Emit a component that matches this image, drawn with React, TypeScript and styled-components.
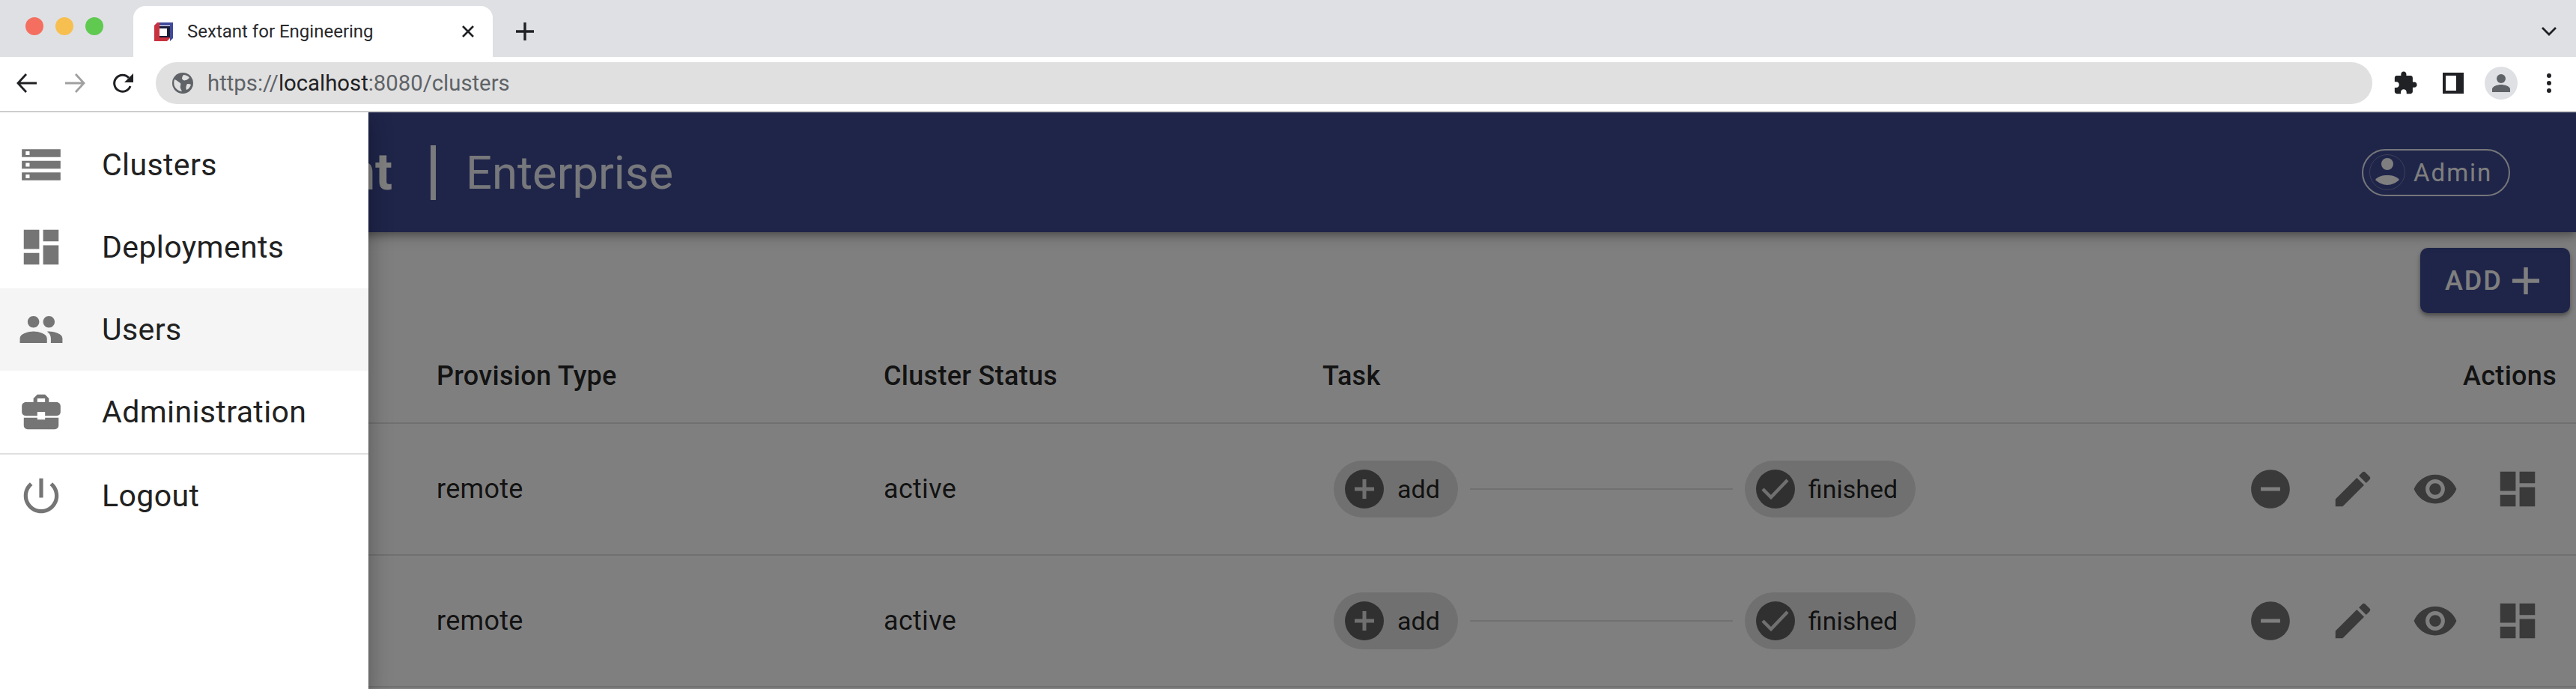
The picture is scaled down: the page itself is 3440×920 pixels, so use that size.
import React from "react";
import styled, { createGlobalStyle } from "styled-components";

const GlobalStyle = createGlobalStyle`
  * { box-sizing: border-box; }
  html, body { margin: 0; padding: 0; background: #fff; }
  body { font-family: Roboto, "Liberation Sans", sans-serif; overflow: hidden; }
`;

const Screen = styled.div`
  width: 3440px;
  height: 920px;
  overflow: hidden;
  display: flex;
  flex-direction: column;
`;

/* browser chrome */
const TabStrip = styled.div`
  height: 76px;
  flex: none;
  background: #dfe0e4;
  display: flex;
  align-items: flex-end;
  color: #202124;
`;

const Lights = styled.div`
  width: 178px;
  height: 76px;
  flex: none;
  display: flex;
  align-items: center;
  gap: 16px;
  padding: 0 0 6px 34px;
`;

const Light = styled.span<{ $color: string }>`
  width: 24px;
  height: 24px;
  border-radius: 50%;
  background: ${({ $color }) => $color};
`;

const Tab = styled.div`
  width: 480px;
  height: 68px;
  flex: none;
  background: #fff;
  border-radius: 16px 16px 0 0;
  display: flex;
  align-items: center;
  padding: 0 24px 0 28px;
`;

const TabTitle = styled.span`
  flex: 1;
  margin-left: 19px;
  font-size: 24px;
  color: #28292c;
  white-space: nowrap;
`;

const NewTab = styled.div`
  width: 86px;
  height: 68px;
  display: flex;
  align-items: center;
  justify-content: center;
`;

const StripEnd = styled.div`
  flex: 1;
  height: 68px;
  display: flex;
  align-items: center;
  justify-content: flex-end;
  padding-right: 26px;
`;

const Toolbar = styled.div`
  height: 74px;
  flex: none;
  background: #fff;
  border-bottom: 2px solid #cdcdcd;
  display: flex;
  align-items: center;
  padding: 0 4px 2px;
`;

const ToolSlot = styled.div`
  width: 64px;
  height: 44px;
  flex: none;
  display: flex;
  align-items: center;
  justify-content: center;
`;

const UrlBar = styled.div`
  width: 2960px;
  height: 56px;
  flex: none;
  margin: 0 12px;
  border-radius: 28px;
  background: #e0e0e0;
  display: flex;
  align-items: center;
  padding-left: 22px;
  font-size: 29.3px;
  color: #5f6368;
`;

const UrlText = styled.span`
  margin-left: 19px;
  white-space: nowrap;
  b {
    font-weight: 400;
    color: #202124;
  }
`;

const Avatar = styled.div`
  width: 44px;
  height: 44px;
  border-radius: 50%;
  background: #dfe0e4;
  display: flex;
  align-items: center;
  justify-content: center;
`;

/* application */
const AppArea = styled.div`
  position: relative;
  flex: 1;
  min-height: 0;
  overflow: hidden;
  background: #fff;
`;

const AppBar = styled.header`
  height: 160px;
  background: #3e4a92;
  color: #fff;
  display: flex;
  align-items: center;
  padding-right: 88px;
  box-shadow: 0 4px 10px rgba(0, 0, 0, 0.3), 0 8px 20px rgba(0, 0, 0, 0.14);
  position: relative;
`;

const Brand = styled.div`
  width: 524px;
  flex: none;
  text-align: right;
  font-size: 68px;
  font-weight: 700;
  white-space: nowrap;
`;

const BrandBar = styled.span`
  width: 7px;
  height: 73px;
  flex: none;
  margin-left: 51px;
  background: rgba(255, 255, 255, 0.95);
`;

const Edition = styled.div`
  flex: 1;
  margin-left: 40px;
  padding-top: 2px;
  font-size: 61.5px;
  opacity: 0.92;
`;

const UserChip = styled.div`
  width: 198px;
  height: 63px;
  border-radius: 32px;
  border: 2px solid rgba(255, 255, 255, 0.9);
  display: flex;
  align-items: center;
  padding-left: 8px;
  font-size: 33px;
  letter-spacing: 2px;
`;

const ChipLabel = styled.span`
  margin-left: 11px;
`;

const ActionRow = styled.div`
  display: flex;
  justify-content: flex-end;
  padding: 21px 8px 22px 0;
`;

const AddButton = styled.div`
  width: 200px;
  height: 87px;
  border-radius: 10px;
  background: #3e4a92;
  color: #fff;
  display: flex;
  align-items: center;
  gap: 13px;
  padding-left: 33px;
  font-size: 36px;
  font-weight: 500;
  letter-spacing: 2px;
  box-shadow: 0 3px 5px rgba(0, 0, 0, 0.3), 0 5px 10px rgba(0, 0, 0, 0.16);
`;

const Row = styled.div<{ $height: number }>`
  height: ${({ $height }) => $height}px;
  display: grid;
  grid-template-columns: 583px 597px 586px 1fr auto;
  align-items: center;
  padding-right: 23px;
  border-bottom: 2px solid #e0e0e0;
  font-size: 36px;
  letter-spacing: 0.3px;
  color: rgba(0, 0, 0, 0.87);
`;

const HeadCell = styled.div<{ $end?: boolean }>`
  font-weight: 500;
  white-space: nowrap;
  ${({ $end }) => ($end ? "margin-right: 3px;" : "")}
`;

const Cell = styled.div``;

const Stepper = styled.div`
  display: flex;
  align-items: center;
  padding-left: 15px;
  font-size: 34px;
  letter-spacing: 0;
`;

const Step = styled.div`
  height: 76px;
  border-radius: 38px;
  background: #e0e0e0;
  display: flex;
  align-items: center;
  gap: 18px;
  padding: 0 24px 0 15px;
`;

const StepDot = styled.span`
  width: 52px;
  height: 52px;
  border-radius: 50%;
  background: #616161;
  display: flex;
  align-items: center;
  justify-content: center;
`;

const StepLine = styled.span`
  width: 351px;
  height: 2px;
  margin: 0 16px;
  background: #e0e0e0;
`;

const Actions = styled.div`
  display: flex;
`;

const IconButton = styled.div`
  width: 110px;
  height: 110px;
  display: flex;
  align-items: center;
  justify-content: center;
  color: #757575;
`;

const Icon = styled.svg<{ $size: number; $color?: string }>`
  width: ${({ $size }) => $size}px;
  height: ${({ $size }) => $size}px;
  flex: none;
  fill: ${({ $color }) => $color || "currentColor"};
  display: block;
`;

/* overlay drawer */
const Backdrop = styled.div`
  position: absolute;
  inset: 0;
  background: rgba(0, 0, 0, 0.5);
`;

const Drawer = styled.nav`
  position: absolute;
  left: 0;
  top: 0;
  bottom: 0;
  width: 492px;
  background: #fff;
  padding-top: 15px;
  box-shadow: 0 8px 10px -5px rgba(0, 0, 0, 0.2), 0 16px 24px 2px rgba(0, 0, 0, 0.14),
    0 6px 30px 5px rgba(0, 0, 0, 0.12);
`;

const MenuItem = styled.div<{ $active?: boolean }>`
  height: 110px;
  display: flex;
  align-items: center;
  padding-left: 24px;
  font-size: 41px;
  letter-spacing: 0.4px;
  color: #212121;
  background: ${({ $active }) => ($active ? "#f5f5f5" : "transparent")};
`;

const MenuIcon = styled.span`
  width: 112px;
  flex: none;
  color: #757575;
`;

const Divider = styled.div`
  height: 2px;
  background: #e0e0e0;
`;

const P = {
  storage: "M2 20h20v-4H2v4zm2-3h2v2H4v-2zM2 4v4h20V4H2zm4 3H4V5h2v2zm-4 7h20v-4H2v4zm2-3h2v2H4v-2z",
  dashboard: "M3 13h8V3H3v10zm0 8h8v-6H3v6zm10 0h8V11h-8v10zm0-18v6h8V3h-8z",
  people:
    "M16 11c1.66 0 2.99-1.34 2.99-3S17.66 5 16 5c-1.66 0-3 1.34-3 3s1.34 3 3 3zm-8 0c1.66 0 2.99-1.34 2.99-3S9.66 5 8 5C6.34 5 5 6.34 5 8s1.34 3 3 3zm0 2c-2.33 0-7 1.17-7 3.5V19h14v-2.5c0-2.33-4.67-3.5-7-3.5zm8 0c-.29 0-.62.02-.97.05 1.16.84 1.97 1.97 1.97 3.45V19h6v-2.5c0-2.33-4.67-3.5-7-3.5z",
  business:
    "M10 16v-1H3.01L3 19c0 1.11.89 2 2 2h14c1.11 0 2-.89 2-2v-4h-7v1h-4zm10-9h-4.01V5l-2-2h-4l-2 2v2H4c-1.1 0-2 .9-2 2v3c0 1.11.89 2 2 2h6v-2h4v2h6c1.1 0 2-.9 2-2V9c0-1.1-.9-2-2-2zm-6 0h-4V5h4v2z",
  power:
    "M13 3h-2v10h2V3zm4.83 2.17l-1.42 1.42C17.99 7.86 19 9.81 19 12c0 3.87-3.13 7-7 7s-7-3.13-7-7c0-2.19 1.01-4.14 2.58-5.42L6.17 5.17C4.23 6.82 3 9.26 3 12c0 4.97 4.03 9 9 9s9-4.03 9-9c0-2.74-1.23-5.18-3.17-6.83z",
  remove: "M12 2C6.48 2 2 6.48 2 12s4.48 10 10 10 10-4.48 10-10S17.52 2 12 2zm5 11H7v-2h10v2z",
  edit: "M3 17.25V21h3.75L17.81 9.94l-3.75-3.75L3 17.25zM20.71 7.04c.39-.39.39-1.02 0-1.41l-2.34-2.34c-.39-.39-1.02-.39-1.41 0l-1.83 1.83 3.75 3.75 1.83-1.83z",
  eye: "M12 4.5C7 4.5 2.73 7.61 1 12c1.73 4.39 6 7.5 11 7.5s9.27-3.11 11-7.5c-1.73-4.39-6-7.5-11-7.5zM12 17c-2.76 0-5-2.24-5-5s2.24-5 5-5 5 2.24 5 5-2.24 5-5 5zm0-8c-1.66 0-3 1.34-3 3s1.34 3 3 3 3-1.34 3-3-1.34-3-3-3z",
  extension:
    "M20.5 11H19V7c0-1.1-.9-2-2-2h-4V3.5C13 2.12 11.88 1 10.5 1S8 2.12 8 3.5V5H4c-1.1 0-1.99.9-1.99 2v3.8H3.5c1.49 0 2.7 1.21 2.7 2.7s-1.21 2.7-2.7 2.7H2V20c0 1.1.9 2 2 2h3.8v-1.5c0-1.49 1.21-2.7 2.7-2.7 1.49 0 2.7 1.21 2.7 2.7V22H17c1.1 0 2-.9 2-2v-4h1.5c1.38 0 2.5-1.12 2.5-2.5S21.88 11 20.5 11z",
};

const Glyph = ({ d, size = 62 }: { d: string; size?: number }) => (
  <Icon $size={size} viewBox="0 0 24 24">
    <path d={d} />
  </Icon>
);

const Favicon = () => (
  <svg width="25" height="25" viewBox="0 0 25 25">
    <path d="M4 0h21v21l-4 4V4H4z" fill="#3f4a9a" />
    <path d="M0 4l4-4h3v19h14v2l-4 4H0z" fill="#c8323f" />
    <path d="M7 5h14v15H7z" fill="#1a1d3a" />
    <path d="M7 8h10v10H7z" fill="#fff" />
  </svg>
);

const CloseX = () => (
  <svg width="18" height="18" viewBox="0 0 18 18" stroke="#202124" strokeWidth="2.6" fill="none">
    <path d="M2 2l14 14M16 2L2 16" />
  </svg>
);

const PlusMark = () => (
  <svg width="24" height="24" viewBox="0 0 24 24" stroke="#202124" strokeWidth="3.4" fill="none">
    <path d="M12 0v24M0 12h24" />
  </svg>
);

const Chevron = () => (
  <svg width="20" height="12" viewBox="0 0 20 12" stroke="#202124" strokeWidth="2.8" fill="none">
    <path d="M1 1l9 9 9-9" />
  </svg>
);

const Arrow = ({ flip, color }: { flip?: boolean; color: string }) => (
  <svg
    width="28"
    height="26"
    viewBox="0 0 28 26"
    stroke={color}
    strokeWidth="2.8"
    fill="none"
    style={flip ? { transform: "scaleX(-1)" } : undefined}
  >
    <path d="M27 13H2M13 1L2 13l11 12" />
  </svg>
);

const Reload = () => (
  <svg width="28" height="28" viewBox="0 0 28 28">
    <path d="M24 18a11 11 0 1 1-2-11" stroke="#202124" strokeWidth="3" fill="none" />
    <path d="M28 1v12H16z" fill="#202124" />
  </svg>
);

const Globe = () => (
  <svg width="28" height="28" viewBox="0 0 28 28">
    <circle cx="14" cy="14" r="14" fill="#5f6368" />
    <path
      d="M3 9c3 1 6 4 8 5 1 2-1 4 0 7l2 4c-4 0-8-3-10-7-1-3-1-6 0-9zM15 3c3 0 6 1 8 4-2 1-3 3-5 3-2 1-4 0-5-2 0-2 1-4 2-5zM20 15c2 0 4 0 5 1-1 3-3 6-6 7-1-2-1-5 1-8z"
      fill="#e0e0e0"
    />
  </svg>
);

const SidePanel = () => (
  <svg width="28" height="28" viewBox="0 0 28 28">
    <path d="M0 0h28v28H0z" fill="#202124" />
    <path d="M4 4h14v20H4z" fill="#fff" />
  </svg>
);

const Dots = () => (
  <svg width="6" height="26" viewBox="0 0 6 26" fill="#202124">
    <circle cx="3" cy="3" r="3" />
    <circle cx="3" cy="13" r="3" />
    <circle cx="3" cy="23" r="3" />
  </svg>
);

const AvatarFigure = () => (
  <svg width="24" height="24" viewBox="0 0 24 24" fill="#5f6368">
    <circle cx="12" cy="6" r="6" />
    <path d="M0 24v-4c0-4 8-6 12-6s12 2 12 6v4z" />
  </svg>
);

const UserIcon = () => (
  <Icon $size={48} viewBox="0 0 48 48">
    <circle cx="24" cy="24" r="23.5" fill="none" stroke="#fff" strokeWidth="0.5" opacity="0.6" />
    <circle cx="24" cy="13" r="8" />
    <path d="M8 34c4-5 10-6 16-6s12 1 16 6c-4 4-10 7-16 7S12 38 8 34z" />
  </Icon>
);

const PlusThin = () => (
  <svg width="36" height="36" viewBox="0 0 36 36" stroke="#fff" strokeWidth="5.5" fill="none">
    <path d="M18 0v36M0 18h36" />
  </svg>
);

const DotPlus = () => (
  <svg width="26" height="26" viewBox="0 0 26 26" stroke="#e0e0e0" strokeWidth="5" fill="none">
    <path d="M13 0v26M0 13h26" />
  </svg>
);

const DotCheck = () => (
  <svg width="37" height="28" viewBox="0 0 37 28" stroke="#e0e0e0" strokeWidth="4.5" fill="none">
    <path d="M2 14l11 11L35 2" />
  </svg>
);

const MENU = [
  { label: "Clusters", icon: P.storage },
  { label: "Deployments", icon: P.dashboard },
  { label: "Users", icon: P.people, active: true },
  { label: "Administration", icon: P.business },
];

const ROWS = [1, 2];

const App = () => (
  <Screen>
    <GlobalStyle />
    <TabStrip>
      <Lights>
        <Light $color="#f46f60" />
        <Light $color="#f7bf4f" />
        <Light $color="#5fc950" />
      </Lights>
      <Tab>
        <Favicon />
        <TabTitle>Sextant for Engineering</TabTitle>
        <CloseX />
      </Tab>
      <NewTab>
        <PlusMark />
      </NewTab>
      <StripEnd>
        <Chevron />
      </StripEnd>
    </TabStrip>
    <Toolbar>
      <ToolSlot>
        <Arrow color="#202124" />
      </ToolSlot>
      <ToolSlot>
        <Arrow flip color="#a0a0a0" />
      </ToolSlot>
      <ToolSlot>
        <Reload />
      </ToolSlot>
      <UrlBar>
        <Globe />
        <UrlText>
          https://<b>localhost</b>:8080/clusters
        </UrlText>
      </UrlBar>
      <ToolSlot>
        <Icon $size={34} $color="#202124" viewBox="0 0 24 24">
          <path d={P.extension} />
        </Icon>
      </ToolSlot>
      <ToolSlot>
        <SidePanel />
      </ToolSlot>
      <ToolSlot>
        <Avatar>
          <AvatarFigure />
        </Avatar>
      </ToolSlot>
      <ToolSlot>
        <Dots />
      </ToolSlot>
    </Toolbar>
    <AppArea>
      <AppBar>
        <Brand>Sextant</Brand>
        <BrandBar />
        <Edition>Enterprise</Edition>
        <UserChip>
          <UserIcon />
          <ChipLabel>Admin</ChipLabel>
        </UserChip>
      </AppBar>
      <ActionRow>
        <AddButton>
          ADD
          <PlusThin />
        </AddButton>
      </ActionRow>
      <Row $height={126}>
        <span />
        <HeadCell>Provision Type</HeadCell>
        <HeadCell>Cluster Status</HeadCell>
        <HeadCell>Task</HeadCell>
        <HeadCell $end>Actions</HeadCell>
      </Row>
      {ROWS.map((id) => (
        <Row key={id} $height={176}>
          <span />
          <Cell>remote</Cell>
          <Cell>active</Cell>
          <Stepper>
            <Step>
              <StepDot>
                <DotPlus />
              </StepDot>
              add
            </Step>
            <StepLine />
            <Step>
              <StepDot>
                <DotCheck />
              </StepDot>
              finished
            </Step>
          </Stepper>
          <Actions>
            <IconButton>
              <Glyph d={P.remove} />
            </IconButton>
            <IconButton>
              <Glyph d={P.edit} />
            </IconButton>
            <IconButton>
              <Glyph d={P.eye} />
            </IconButton>
            <IconButton>
              <Glyph d={P.dashboard} />
            </IconButton>
          </Actions>
        </Row>
      ))}
      <Backdrop />
      <Drawer>
        {MENU.map((item) => (
          <MenuItem key={item.label} $active={item.active}>
            <MenuIcon>
              <Glyph d={item.icon} />
            </MenuIcon>
            {item.label}
          </MenuItem>
        ))}
        <Divider />
        <MenuItem>
          <MenuIcon>
            <Glyph d={P.power} />
          </MenuIcon>
          Logout
        </MenuItem>
      </Drawer>
    </AppArea>
  </Screen>
);

export default App;
